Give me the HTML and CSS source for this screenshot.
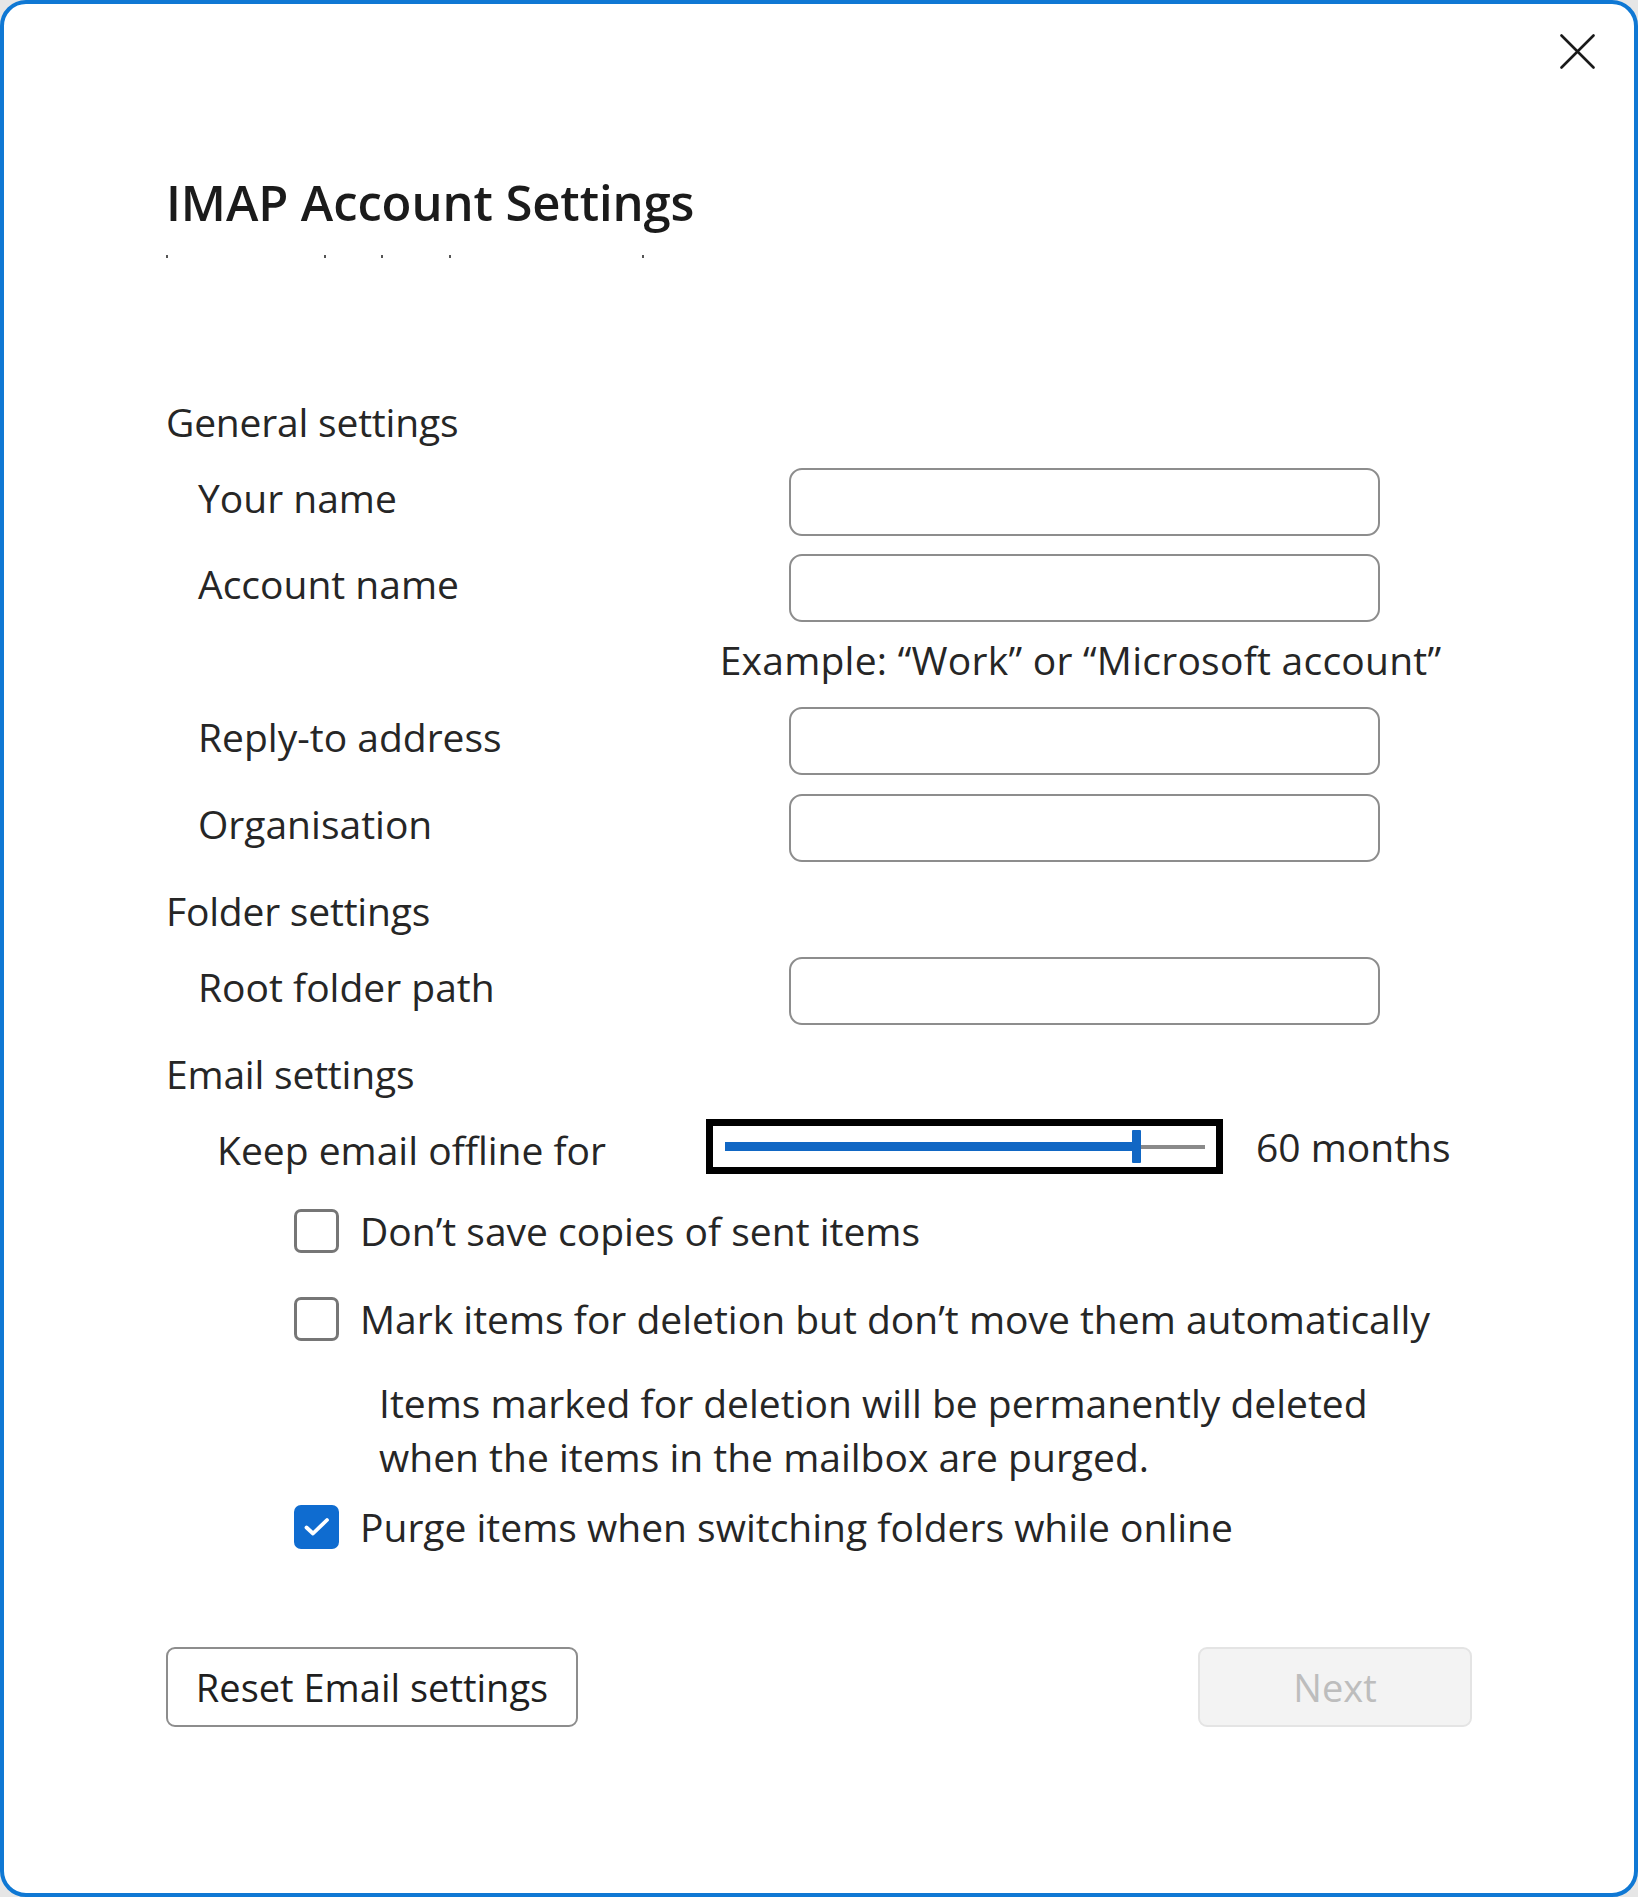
FILE: index.html
```html
<!DOCTYPE html>
<html lang="en">
<head>
<meta charset="utf-8">
<title>IMAP Account Settings</title>
<link rel="stylesheet" href="styles.css">
</head>
<body>
<div class="window">
  <div class="titlebar">
    <button class="close" aria-label="Close">
      <svg width="35" height="35" viewBox="0 0 35 35"><path d="M1.5 1.5 L33.5 33.5 M33.5 1.5 L1.5 33.5" stroke="#1a1a1a" stroke-width="2.6" stroke-linecap="round" fill="none"/></svg>
    </button>
  </div>
  <div class="content">
    <h1 class="title">IMAP Account Settings</h1>
    <div class="ghost"><i></i><i></i><i></i><i></i><i></i></div>

    <div class="section sec-general">General settings</div>
    <div class="row row-1"><label class="lbl">Your name</label><div class="input"></div></div>
    <div class="row row-2"><label class="lbl">Account name</label><div class="input"></div></div>
    <div class="example"><div class="spacer"></div><div class="example-text">Example: “Work” or “Microsoft account”</div></div>
    <div class="row row-3"><label class="lbl">Reply-to address</label><div class="input"></div></div>
    <div class="row row-4"><label class="lbl">Organisation</label><div class="input"></div></div>

    <div class="section sec-folder">Folder settings</div>
    <div class="row row-5"><label class="lbl">Root folder path</label><div class="input"></div></div>

    <div class="section sec-email">Email settings</div>
    <div class="slider-row">
      <label class="slider-lbl">Keep email offline for</label>
      <div class="slider">
        <div class="track-fill"></div>
        <div class="thumb"></div>
        <div class="track-rest"></div>
      </div>
      <div class="slider-value">60 months</div>
    </div>

    <div class="check check-1"><span class="box"></span><span class="check-lbl">Don’t save copies of sent items</span></div>
    <div class="check check-2"><span class="box"></span><span class="check-lbl">Mark items for deletion but don’t move them automatically</span></div>
    <p class="desc">Items marked for deletion will be permanently deleted<br>when the items in the mailbox are purged.</p>
    <div class="check check-3"><span class="box checked"><svg width="28" height="22" viewBox="0 0 28 22"><path d="M3.5 11.5 L10 17.5 L24 4" stroke="#ffffff" stroke-width="3.8" fill="none" stroke-linecap="round" stroke-linejoin="round"/></svg></span><span class="check-lbl">Purge items when switching folders while online</span></div>

    <div class="buttons">
      <button class="btn btn-reset">Reset Email settings</button>
      <button class="btn btn-next" disabled>Next</button>
    </div>
  </div>
</div>
</body>
</html>
```

FILE: styles.css
```css
* { box-sizing: border-box; }
html, body { margin: 0; padding: 0; }
body {
  background: #e6e6e6;
  font-family: "Open Sans", "Noto Sans", "Liberation Sans", sans-serif;
  color: #262626;
}
.window {
  width: 1638px;
  height: 1897px;
  background: #ffffff;
  border: 4px solid #0f78d4;
  border-radius: 26px;
  overflow: hidden;
}
.titlebar {
  display: flex;
  justify-content: flex-end;
  padding: 30px 39px 0 0;
  height: 65px;
}
.close {
  width: 35px;
  height: 35px;
  padding: 0;
  margin: 0;
  border: 0;
  background: transparent;
  display: flex;
}
.content {
  padding: 0 162px;
}
.title {
  margin: 101px 0 0 0;
  font-size: 49px;
  line-height: 64px;
  font-weight: 600;
  color: #1b1b1b;
  letter-spacing: -0.1px;
}
.ghost {
  display: flex;
  height: 3px;
  margin-top: 21px;
}
.ghost i {
  display: block;
  width: 2px;
  height: 3px;
  background: #555555;
}
.ghost i:nth-child(2) { margin-left: 156px; }
.ghost i:nth-child(3) { margin-left: 55px; }
.ghost i:nth-child(4) { margin-left: 66px; }
.ghost i:nth-child(5) { margin-left: 191px; }

.section, .lbl, .example-text, .slider-lbl, .slider-value, .check-lbl {
  font-size: 39px;
  line-height: 50px;
  white-space: nowrap;
}
.section { height: 50px; letter-spacing: -0.2px; }
.sec-general { margin-top: 139px; }
.sec-folder { margin-top: 24px; }
.sec-email { margin-top: 24px; }

.row {
  display: flex;
  align-items: flex-start;
  height: 68px;
  padding-left: 32px;
}
.row-1 { margin-top: 21px; }
.row-2 { margin-top: 18px; }
.row-3 { margin-top: 22px; }
.row-4 { margin-top: 19px; }
.row-5 { margin-top: 21px; }
.lbl {
  width: 591px;
  margin-top: 5px;
}
.input {
  width: 591px;
  height: 68px;
  border: 2px solid #8d8d8d;
  border-radius: 13px;
  background: #ffffff;
}
.example {
  display: flex;
  height: 50px;
  margin-top: 13px;
  padding-left: 32px;
}
.spacer { width: 587px; flex: none; }
.example-text {
  width: 591px;
  display: flex;
  justify-content: center;
  color: #262626;
  letter-spacing: 0.25px;
}

.slider-row {
  display: flex;
  align-items: flex-start;
  height: 55px;
  margin-top: 20px;
  padding-left: 51px;
}
.slider-lbl {
  width: 489px;
  margin-top: 6px;
}
.slider {
  width: 517px;
  height: 55px;
  border: 7px solid #000000;
  display: flex;
  align-items: center;
  padding-left: 12px;
}
.track-fill {
  width: 407px;
  height: 9px;
  background: #1167c4;
}
.thumb {
  width: 9px;
  height: 33px;
  background: #1167c4;
  border-radius: 1px;
}
.track-rest {
  width: 64px;
  height: 4px;
  background: #8a8a8a;
}
.slider-value {
  margin-left: 33px;
  margin-top: 3px;
}

.check {
  display: flex;
  align-items: flex-start;
  height: 50px;
  padding-left: 128px;
}
.check-1 { margin-top: 32px; }
.check-2 { margin-top: 38px; }
.check-3 { margin-top: 18px; }
.box {
  width: 45px;
  height: 44px;
  margin-top: 3px;
  border: 3px solid #767676;
  border-radius: 7px;
  flex: none;
  display: flex;
  align-items: center;
  justify-content: center;
}
.box.checked {
  background: #0f6cd0;
  border-color: #0f6cd0;
}
.check-lbl {
  margin-left: 21px;
}
.desc {
  margin: 32px 0 0 0;
  padding-left: 213px;
  font-size: 39px;
  line-height: 54px;
  height: 108px;
  white-space: nowrap;
}

.buttons {
  display: flex;
  justify-content: space-between;
  margin-top: 95px;
}
.btn {
  height: 80px;
  font-family: "Open Sans", "Noto Sans", "Liberation Sans", sans-serif;
  font-size: 38px;
  border-radius: 9px;
  padding: 0;
}
.btn-reset {
  width: 412px;
  background: #ffffff;
  border: 2px solid #8d8d8d;
  color: #1f1f1f;
}
.btn-next {
  width: 274px;
  background: #f3f3f3;
  border: 2px solid #e4e4e4;
  color: #bdbdbd;
}
```
